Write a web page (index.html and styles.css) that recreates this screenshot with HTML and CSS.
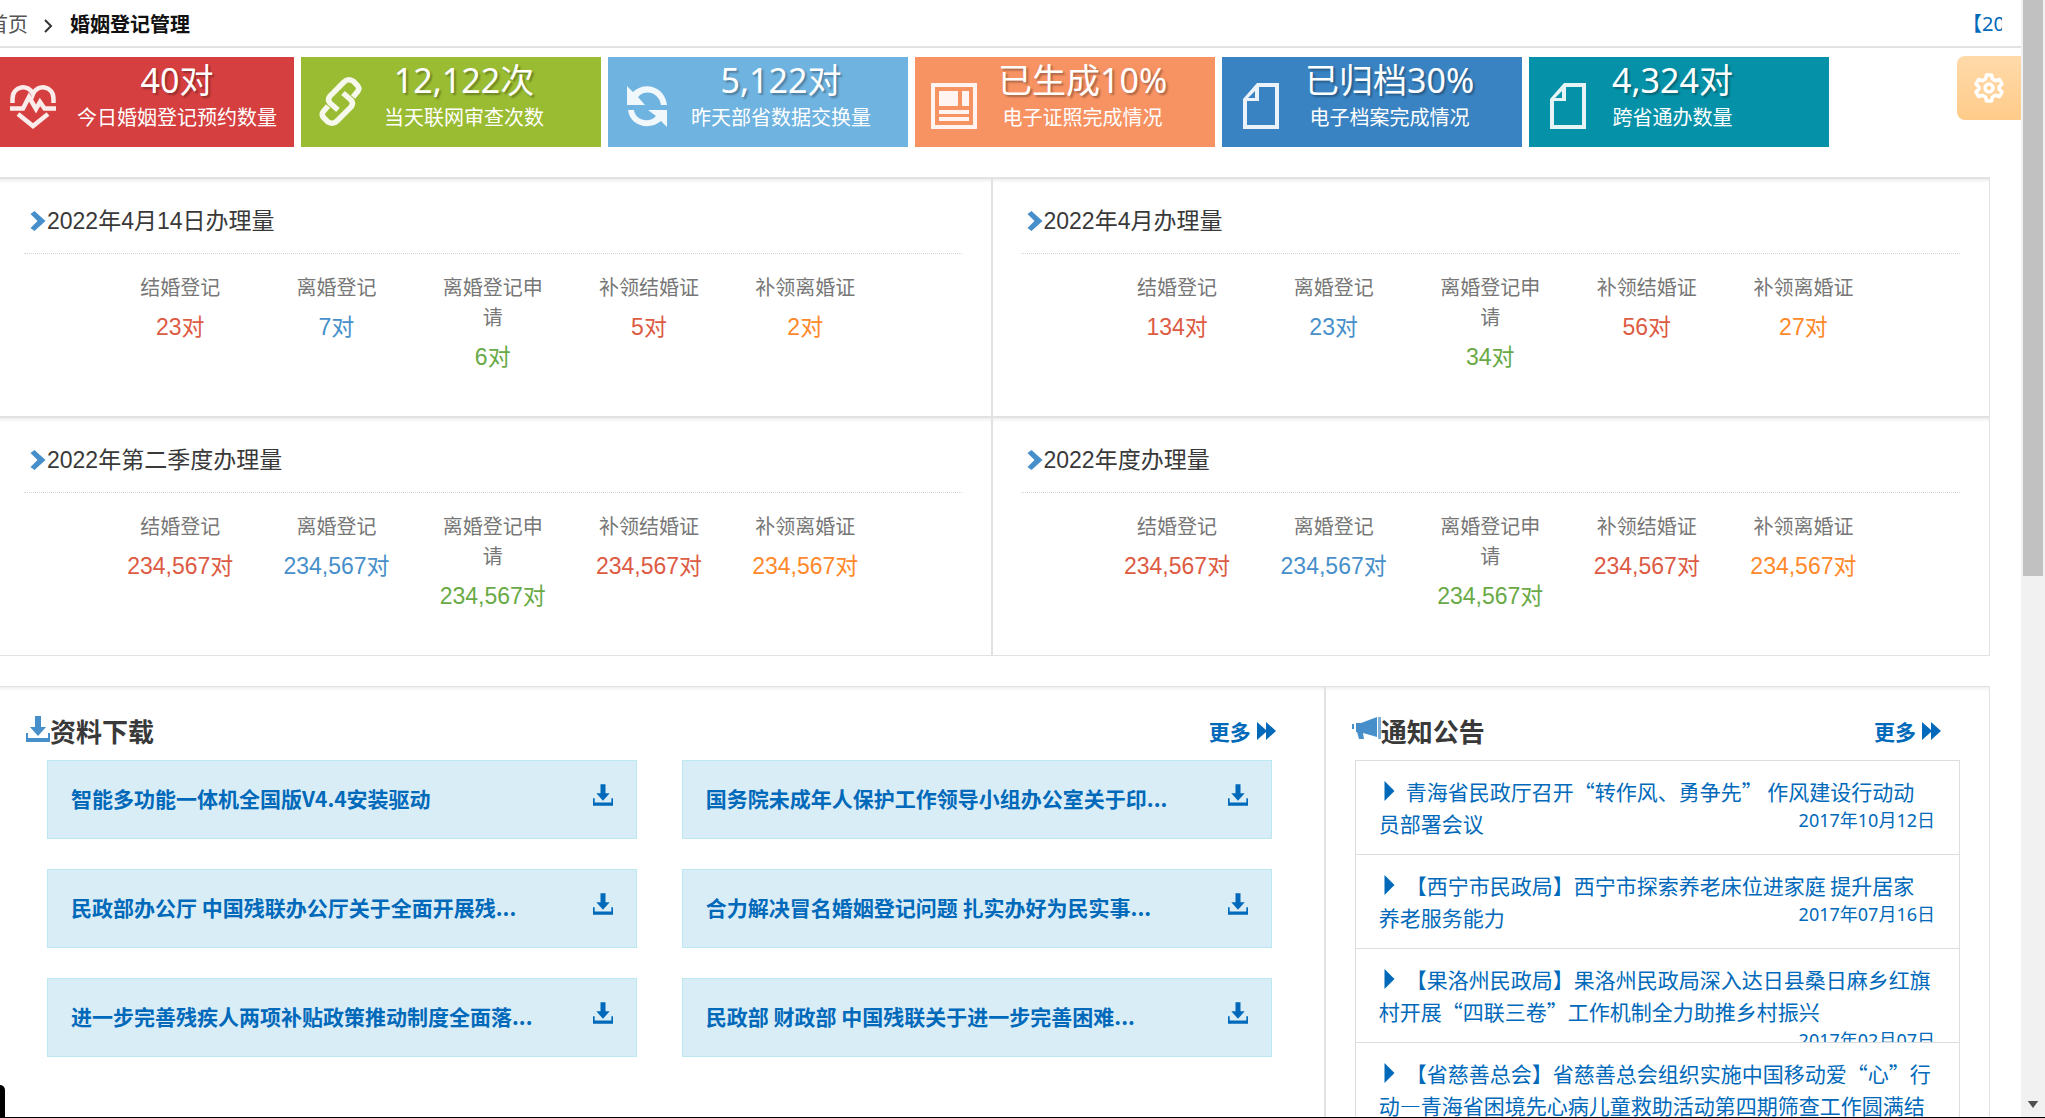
FILE: index.html
```html
<!DOCTYPE html>
<html lang="zh-CN">
<head>
<meta charset="utf-8">
<title>婚姻登记管理</title>
<link rel="stylesheet" href="styles.css">
</head>
<body>
<svg class="defs" aria-hidden="true">
  <symbol id="i-download" viewBox="0 0 24 26"><path d="M9 0h6v11h5l-8 9-8-9h5zM0 17h2v5h20v-5h2v9H0z"/></symbol>
  <symbol id="i-forward" viewBox="0 0 20 18"><path d="M0 0l9 8V0l10 9-10 9v-8l-9 8z"/></symbol>
  <symbol id="i-caret" viewBox="0 0 26 20"><path d="M5 0l10 10L5 20z"/></symbol>
  <symbol id="i-chevron" viewBox="0 0 16 20"><path d="M0 3l4-3 11 10L4 20l-4-3 7-7z"/></symbol>
  <symbol id="i-file" viewBox="0 0 36 46"><path fill-rule="evenodd" d="M14 0h22v46H0V16zM16 4v14H4v24h28V4zM12 8l-7 7h7z"/></symbol>
</svg>
<div class="page">
  <main class="main">
    <header class="topbar">
      <nav class="crumbs">
        <a href="#">首页</a>
        <svg class="crumb-sep" viewBox="0 0 9 14"><path d="M1 1l6 6-6 6" /></svg>
        <strong>婚姻登记管理</strong>
      </nav>
      <a class="ticker" href="#">【20</a>
    </header>

    <section class="cards">
      <div class="card red">
        <svg class="card-icon" viewBox="0 0 46 46"><g fill="none" stroke="#fff" stroke-width="4.500"><path d="M2.500 20V16C2.500 2 19 1 23 11 27 1 43.500 2 43.500 16V20M0 25.500H13L19 14 26 26 30 19 34.500 25.500H46M8 31L23 43 38 31"/></g></svg>
        <p class="card-text"><b>40对</b><span>今日婚姻登记预约数量</span></p>
      </div>
      <div class="card green">
        <svg class="card-icon" viewBox="0 0 46 46"><g fill="none" stroke="#fff" stroke-width="5.500"><path d="M36 14L41 8Q43 5 40 2L36 -2Q31 -5 27 -1L13 13Q10 17 13 20L21 27"/><path d="M11 23L6 29Q4 32 7 35L11 39Q16 42 20 38L34 24Q37 20 34 17L26 10"/></g></svg>
        <p class="card-text"><b>12,122次</b><span>当天联网审查次数</span></p>
      </div>
      <div class="card sky">
        <svg class="card-icon" viewBox="0 0 46 46"><path fill="#fff" d="M3 3l6 6C20-2 41 3 43 22h-6C35 9 21 6 14 14l7 8H3zM43 44l-6-6C25 48 6 43 4 27h6c1 10 15 14 22 6l-8-6h19z"/></svg>
        <p class="card-text"><b>5,122对</b><span>昨天部省数据交换量</span></p>
      </div>
      <div class="card orange">
        <svg class="card-icon" viewBox="0 0 46 46"><path fill="#fff" fill-rule="evenodd" d="M0 0h46v46H0zM4 4v38h38V4zM8 8h19v15H8zM31 8h7v15h-7zM8 27h30v4H8zM8 34h30v4H8z"/></svg>
        <p class="card-text"><b>已生成10%</b><span>电子证照完成情况</span></p>
      </div>
      <div class="card blue">
        <svg class="card-icon"><use href="#i-file"/></svg>
        <p class="card-text"><b>已归档30%</b><span>电子档案完成情况</span></p>
      </div>
      <div class="card teal">
        <svg class="card-icon"><use href="#i-file"/></svg>
        <p class="card-text"><b>4,324对</b><span>跨省通办数量</span></p>
      </div>
    </section>

    <section class="stats">
      <article class="stat">
        <h2><svg class="chev"><use href="#i-chevron"/></svg>2022年4月14日办理量</h2>
        <dl>
          <div><dt>结婚登记</dt><dd class="c-red">23对</dd></div>
          <div><dt>离婚登记</dt><dd class="c-blue">7对</dd></div>
          <div><dt>离婚登记申请</dt><dd class="c-green">6对</dd></div>
          <div><dt>补领结婚证</dt><dd class="c-red">5对</dd></div>
          <div><dt>补领离婚证</dt><dd class="c-orange">2对</dd></div>
        </dl>
      </article>
      <article class="stat">
        <h2><svg class="chev"><use href="#i-chevron"/></svg>2022年4月办理量</h2>
        <dl>
          <div><dt>结婚登记</dt><dd class="c-red">134对</dd></div>
          <div><dt>离婚登记</dt><dd class="c-blue">23对</dd></div>
          <div><dt>离婚登记申请</dt><dd class="c-green">34对</dd></div>
          <div><dt>补领结婚证</dt><dd class="c-red">56对</dd></div>
          <div><dt>补领离婚证</dt><dd class="c-orange">27对</dd></div>
        </dl>
      </article>
      <article class="stat">
        <h2><svg class="chev"><use href="#i-chevron"/></svg>2022年第二季度办理量</h2>
        <dl>
          <div><dt>结婚登记</dt><dd class="c-red">234,567对</dd></div>
          <div><dt>离婚登记</dt><dd class="c-blue">234,567对</dd></div>
          <div><dt>离婚登记申请</dt><dd class="c-green">234,567对</dd></div>
          <div><dt>补领结婚证</dt><dd class="c-red">234,567对</dd></div>
          <div><dt>补领离婚证</dt><dd class="c-orange">234,567对</dd></div>
        </dl>
      </article>
      <article class="stat">
        <h2><svg class="chev"><use href="#i-chevron"/></svg>2022年度办理量</h2>
        <dl>
          <div><dt>结婚登记</dt><dd class="c-red">234,567对</dd></div>
          <div><dt>离婚登记</dt><dd class="c-blue">234,567对</dd></div>
          <div><dt>离婚登记申请</dt><dd class="c-green">234,567对</dd></div>
          <div><dt>补领结婚证</dt><dd class="c-red">234,567对</dd></div>
          <div><dt>补领离婚证</dt><dd class="c-orange">234,567对</dd></div>
        </dl>
      </article>
    </section>

    <div class="lower">
      <section class="downloads">
        <div class="head">
          <h2><svg class="head-dl"><use href="#i-download"/></svg>资料下载</h2>
          <a class="more" href="#">更多<svg><use href="#i-forward"/></svg></a>
        </div>
        <div class="files">
          <a href="#"><span>智能多功能一体机全国版V4.4安装驱动</span><svg><use href="#i-download"/></svg></a>
          <a href="#"><span>国务院未成年人保护工作领导小组办公室关于印...</span><svg><use href="#i-download"/></svg></a>
          <a href="#"><span>民政部办公厅 中国残联办公厅关于全面开展残...</span><svg><use href="#i-download"/></svg></a>
          <a href="#"><span>合力解决冒名婚姻登记问题 扎实办好为民实事...</span><svg><use href="#i-download"/></svg></a>
          <a href="#"><span>进一步完善残疾人两项补贴政策推动制度全面落...</span><svg><use href="#i-download"/></svg></a>
          <a href="#"><span>民政部 财政部 中国残联关于进一步完善困难...</span><svg><use href="#i-download"/></svg></a>
        </div>
      </section>
      <section class="notices">
        <div class="head">
          <h2><svg class="head-horn" viewBox="0 0 29 24"><path d="M0 7h2v5H0zM4 6h5L25 0v20l-14-4 1 6H7L5 15H4z"/><path opacity=".7" d="M26 0h3v22h-3z"/></svg>通知公告</h2>
          <a class="more" href="#">更多<svg><use href="#i-forward"/></svg></a>
        </div>
        <ul>
          <li><a href="#"><svg><use href="#i-caret"/></svg>青海省民政厅召开“转作风、勇争先” 作风建设行动动员部署会议</a><time>2017年10月12日</time></li>
          <li><a href="#"><svg><use href="#i-caret"/></svg>【西宁市民政局】西宁市探索养老床位进家庭 提升居家养老服务能力</a><time>2017年07月16日</time></li>
          <li><a href="#"><svg><use href="#i-caret"/></svg>【果洛州民政局】果洛州民政局深入达日县桑日麻乡红旗村开展“四联三卷”工作机制全力助推乡村振兴</a><time>2017年02月07日</time></li>
          <li><a href="#"><svg><use href="#i-caret"/></svg>【省慈善总会】省慈善总会组织实施中国移动爱“心”行动—青海省困境先心病儿童救助活动第四期筛查工作圆满结</a></li>
        </ul>
      </section>
    </div>
  </main>
  <div class="scrollbar" aria-hidden="true">
    <div class="thumb"></div>
    <svg viewBox="0 0 12 8"><path d="M0 0h12L6 8z"/></svg>
  </div>
  <button class="settings" type="button" aria-label="设置">
    <svg viewBox="0 0 30 30"><g fill="none" stroke="#fff" stroke-width="3.500" stroke-linejoin="round"><path d="M12.500 2h5l1 4 3 1.700 4-1.200 2.500 4.500-3 3v2l3 3-2.500 4.500-4-1.200-3 1.700-1 4h-5l-1-4-3-1.700-4 1.200L2 19l3-3v-2l-3-3 2.500-4.500 4 1.200 3-1.700z"/><circle cx="15" cy="15" r="4"/></g></svg>
  </button>
  <div class="corner-tab"></div>
</div>
</body>
</html>
```
FILE: styles.css
```css
* { box-sizing: border-box; }
body {
  margin: 0;
  background: #fff;
  color: #393939;
  font-family: "Noto Sans CJK SC", sans-serif;
  font-size: 20px;
  line-height: 30px;
}
h2, p, dl, dd, ul { margin: 0; padding: 0; }
a { color: #0069ba; text-decoration: none; }
svg { fill: currentColor; flex: none; }
.defs { position: absolute; width: 0; height: 0; }

.page {
  position: relative;
  display: flex;
  height: 100vh;
  overflow: hidden;
  border-bottom: 1px solid #000;
}
.main { flex: 1; min-width: 0; margin-left: -12px; }

/* breadcrumb bar */
.topbar {
  display: flex;
  justify-content: space-between;
  align-items: center;
  height: 48px;
  padding: 2px 19px 0 0;
  border-bottom: 2px solid #e2e2e2;
}
.crumbs { display: flex; align-items: center; color: #111; }
.crumbs a { color: #555; }
.crumb-sep { width: 9px; height: 14px; margin: 4px 17px 0 16px; fill: none; stroke: #333; stroke-width: 2; }
.ticker {
  width: 40px;
  overflow: hidden;
  white-space: nowrap;
  font-family: "Noto Sans", "Noto Sans CJK SC", sans-serif;
}

/* summary cards */
.cards { display: flex; gap: 7px; padding: 9px 0 0 6px; }
.card {
  display: flex;
  align-items: center;
  width: 300px;
  height: 90px;
  padding-left: 16px;
  color: #fff;
}
.card-icon { width: 46px; height: 46px; margin-top: 8px; opacity: .9; overflow: visible; }
.card-text { align-self: flex-start; margin: 1px 0 0 21px; text-align: center; }
.card-text b {
  display: block;
  font: 400 34px/44px "Noto Sans", "Noto Sans CJK SC", sans-serif;
  text-shadow: 2px 2px 2px rgba(0, 0, 0, .3);
}
.card-text span { display: block; }
.red { background: #d53f40; }
.green { background: #9abc32; }
.sky { background: #6fb3e0; }
.orange { background: #f79263; }
.blue { background: #3983c2; }
.teal { background: #0592a9; }

/* volume panels */
.stats {
  display: grid;
  grid-template-columns: 1fr 1fr;
  margin: 30px 31px 0 8px;
  border-right: 1px solid #e2e2e2;
  border-bottom: 1px solid #e2e2e2;
}
.stat {
  height: 239px;
  padding: 16px 29px 0 28px;
  border-top: 2px solid #e2e2e2;
  box-shadow: inset 0 4px 4px -3px rgba(0, 0, 0, .1);
  font-family: "Liberation Sans", "Noto Sans CJK SC", sans-serif;
}
.stat:nth-child(odd) { border-right: 2px solid #e2e2e2; }
.stat h2 {
  display: flex;
  align-items: center;
  padding: 10px 0 16px 6px;
  border-bottom: 1px dotted #d4d4d4;
  font-size: 23px;
  font-weight: 400;
  line-height: 32px;
}
.chev { width: 17px; height: 20px; color: #478fca; }
.stat dl {
  display: grid;
  grid-template-columns: repeat(5, 1fr);
  padding: 19px calc(100% / 12) 0;
  text-align: center;
}
.stat dl div { padding: 0 20px; }
dt { color: #777; }
dd { display: flex; justify-content: center; margin-top: 9px; font-size: 23px; white-space: nowrap; }
.c-red { color: #dd5a43; }
.c-blue { color: #478fca; }
.c-green { color: #69aa46; }
.c-orange { color: #ff892a; }

/* downloads and notices */
.lower {
  display: grid;
  grid-template-columns: 667fr 333fr;
  height: 500px;
  margin: 30px 31px 0 8px;
  border: 1px solid #e2e2e2;
  box-shadow: inset 0 4px 4px -3px rgba(0, 0, 0, .1);
}
.downloads { padding: 28px 52px 0 29px; border-right: 2px solid #e2e2e2; }
.notices { padding: 28px 29px 0 26px; }
.head { display: flex; justify-content: space-between; align-items: center; height: 32px; }
.head h2 { display: flex; align-items: center; font-size: 26px; }
.head h2 svg { color: #478fca; }
.head-dl { width: 24px; height: 26px; margin-bottom: 4px; }
.head-horn { width: 29px; height: 24px; margin-bottom: 4px; }
.more { display: flex; align-items: center; gap: 6px; font-size: 21px; font-weight: 700; }
.more svg { width: 20px; height: 18px; }
.downloads .more { margin-right: -5px; }
.notices .more { margin-right: 18px; }
.files {
  display: grid;
  grid-template-columns: 1fr 1fr;
  gap: 30px 45px;
  margin: 13px 0 0 21px;
}
.files a {
  display: flex;
  align-items: center;
  justify-content: space-between;
  height: 79px;
  padding: 0 23px 4px;
  border: 1px solid #bce8f1;
  background: #d9edf7;
  font-size: 21px;
  font-weight: 700;
}
.files svg { width: 20px; height: 22px; margin-bottom: 6px; }
.notices ul { margin: 13px 0 0 3px; border: 1px solid #ddd; border-width: 1px 1px 0; list-style: none; }
.notices li {
  height: 94px;
  padding: 14px 24px 0 23px;
  overflow: hidden;
  border-bottom: 1px solid #ddd;
  font-size: 21px;
  line-height: 32px;
}
.notices li a { margin-right: 4px; }
.notices li svg { width: 27px; height: 20px; vertical-align: -1px; }
time { float: right; color: #0069ba; font: 18px/26px "Noto Sans", "Noto Sans CJK SC", sans-serif; }

/* window scrollbar */
.scrollbar {
  display: flex;
  flex-direction: column;
  align-items: center;
  justify-content: space-between;
  width: 24px;
  padding: 0 2px 9px;
  background: #f1f1f1;
}
.thumb { width: 100%; height: 52%; background: #c1c1c1; }
.scrollbar svg { width: 12px; height: 7px; color: #505050; }

/* overlays */
.settings {
  position: absolute;
  top: 56px;
  right: 24px;
  display: flex;
  align-items: center;
  justify-content: center;
  width: 64px;
  height: 64px;
  padding: 0;
  border: 0;
  border-radius: 8px 0 0 8px;
  background: linear-gradient(#ffdaaa, #ffcb8a);
}
.settings svg { width: 30px; height: 30px; }
.corner-tab {
  position: absolute;
  left: 0;
  bottom: 0;
  width: 5px;
  height: 32px;
  border-radius: 0 5px 0 0;
  background: #000;
}
```
